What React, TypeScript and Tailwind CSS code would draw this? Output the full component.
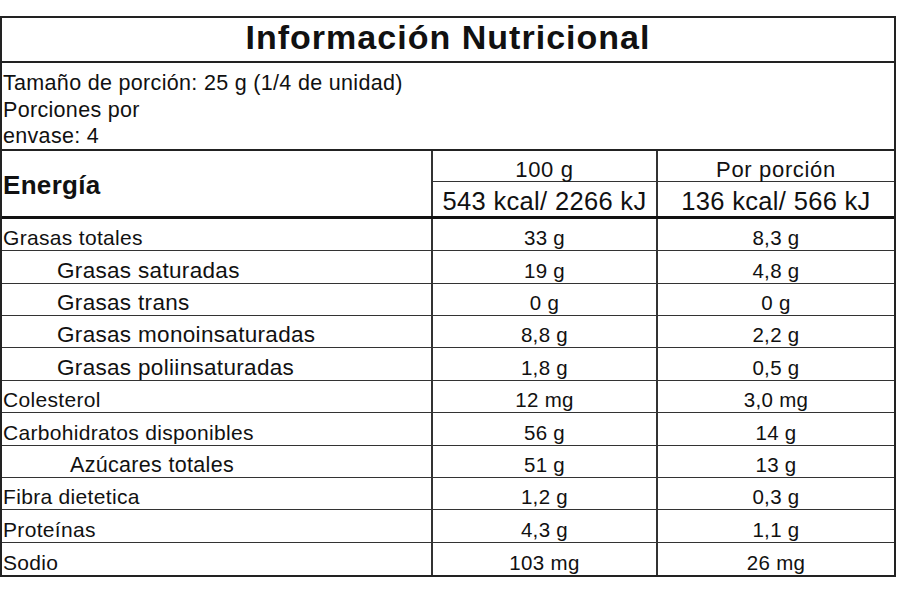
const rows: { label: string; a: string; b: string; indent?: "sm" | "lg" }[] = [
  { label: "Grasas totales", a: "33 g", b: "8,3 g" },
  { label: "Grasas saturadas", a: "19 g", b: "4,8 g", indent: "sm" },
  { label: "Grasas trans", a: "0 g", b: "0 g", indent: "sm" },
  { label: "Grasas monoinsaturadas", a: "8,8 g", b: "2,2 g", indent: "sm" },
  { label: "Grasas poliinsaturadas", a: "1,8 g", b: "0,5 g", indent: "sm" },
  { label: "Colesterol", a: "12 mg", b: "3,0 mg" },
  { label: "Carbohidratos disponibles", a: "56 g", b: "14 g" },
  { label: "Azúcares totales", a: "51 g", b: "13 g", indent: "lg" },
  { label: "Fibra dietetica", a: "1,2 g", b: "0,3 g" },
  { label: "Proteínas", a: "4,3 g", b: "1,1 g" },
  { label: "Sodio", a: "103 mg", b: "26 mg" },
];

export default function App() {
  return (
    <div className="h-[600px] w-[900px] bg-white pt-4 font-['Liberation_Sans',Arial,sans-serif] text-[#111] tracking-[0.02em]">
      <div className="w-[896px] border-2 border-[#222]">
        {/* Title */}
        <div className="flex h-[45px] items-start justify-center border-b-2 border-[#222] pt-[2px] text-[34px] leading-[34px] font-bold tracking-[0.03em]">
          Información Nutricional
        </div>

        {/* Serving size */}
        <div className="h-[88px] border-b-2 border-[#222] pt-[7px] pl-px text-[21.5px] leading-[26.7px]">
          <div>Tamaño de porción: 25 g (1/4 de unidad)</div>
          <div>
            Porciones por
            <br />
            envase: 4
          </div>
        </div>

        {/* Energy header */}
        <div className="grid h-[68px] grid-cols-[431px_225px_1fr] border-b-[3px] border-[#111]">
          <div className="flex items-center border-r-2 border-[#333] pt-[2px] pl-px text-[26px] leading-[26px] font-bold">
            Energía
          </div>
          <div className="flex flex-col border-r-2 border-[#333]">
            <div className="flex h-[31px] items-end justify-center border-b-[1.5px] border-[#333] text-[22px] leading-[22px] tracking-[0.03em]">
              100 g
            </div>
            <div className="flex flex-1 items-end justify-center pb-[2px] text-[25.5px] leading-[25.5px]">
              543 kcal/ 2266 kJ
            </div>
          </div>
          <div className="flex flex-col">
            <div className="flex h-[31px] items-end justify-center border-b-[1.5px] border-[#333] text-[22px] leading-[22px] tracking-[0.03em]">
              Por porción
            </div>
            <div className="flex flex-1 items-end justify-center pb-[2px] text-[25.5px] leading-[25.5px]">
              136 kcal/ 566 kJ
            </div>
          </div>
        </div>

        {/* Nutrient rows */}
        {rows.map((r, i) => (
          <div
            key={r.label}
            className={`grid h-[32.36px] grid-cols-[431px_225px_1fr] text-[20.5px] leading-[20px] ${
              i < rows.length - 1 ? "border-b-[1.5px] border-[#333]" : ""
            }`}
          >
            <div
              className={`flex items-end border-r-2 border-[#333] pb-[2px] ${
                r.indent === "sm"
                  ? "pl-[55px] text-[22.5px]"
                  : r.indent === "lg"
                    ? "pl-[68px] text-[21.5px]"
                    : "pl-px text-[21px]"
              }`}
            >
              {r.label}
            </div>
            <div className="flex items-end justify-center border-r-2 border-[#333] pb-[2px]">{r.a}</div>
            <div className="flex items-end justify-center pb-[2px]">{r.b}</div>
          </div>
        ))}
      </div>
    </div>
  );
}
